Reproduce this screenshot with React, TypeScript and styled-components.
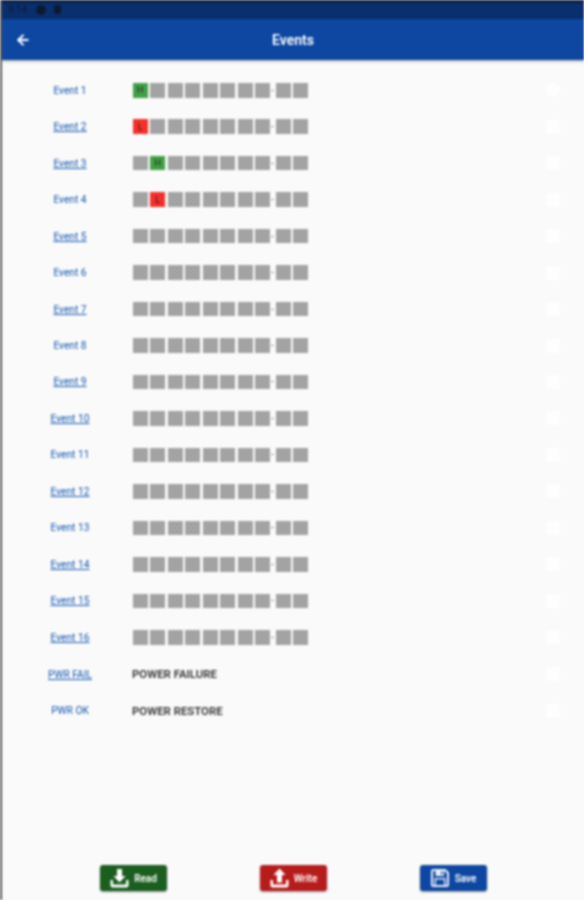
import * as React from 'react'
import styled, { createGlobalStyle } from 'styled-components'
import { ArrowLeft } from 'lucide-react'

const Global = createGlobalStyle`
  html, body {
    margin: 0;
    background: #fafafa;
  }
`

const Page = styled.div`
  border-left: 2px solid #555;
  box-sizing: border-box;
  display: flex;
  filter: blur(0.9px);
  flex-direction: column;
  font-family: Roboto, "Liberation Sans", sans-serif;
  height: 900px;
  overflow: hidden;
  width: 584px;
`

const StatusBar = styled.div`
  align-items: center;
  background: linear-gradient(#08172f 0, #0a2f6e 4px);
  color: #0c1a30;
  display: flex;
  font-size: 10px;
  gap: 9px;
  height: 19px;
  padding-left: 6px;
`

const Dot = styled.span`
  background: #0c1a30;
  border-radius: 50%;
  height: 10px;
  width: 10px;
`

const Pin = styled.span`
  background: #0c1a30;
  border-radius: 2px;
  height: 9px;
  margin-left: -1px;
  width: 7px;
`

const AppBar = styled.header`
  align-items: center;
  background: #0d47a1;
  box-shadow: 0 1px 3px rgba(0, 0, 0, 0.35);
  color: #fff;
  display: flex;
  height: 41px;
  padding-left: 13px;
  position: relative;
`

const Title = styled.h1`
  flex: 1;
  font-size: 14px;
  font-weight: 600;
  margin: 0;
  padding-right: 29px;
  text-align: center;
`

const List = styled.div`
  display: flex;
  flex-direction: column;
  padding-top: 12px;
`

const Row = styled.div`
  align-items: center;
  box-sizing: border-box;
  display: flex;
  height: 36.47px;
`

const PowerRow = styled(Row)`
  padding-top: 1px;
`

const EventLink = styled.a<{ $plain?: boolean }>`
  box-sizing: border-box;
  color: #1557b0;
  flex: none;
  font-size: 10.2px;
  padding-left: 5px;
  text-align: center;
  text-decoration: ${(p) => (p.$plain ? 'none' : 'underline')};
  width: 131px;
`

const Cells = styled.div`
  align-items: center;
  display: flex;
  gap: 2.9px;
  width: 413px;
`

const Cell = styled.div<{ $state?: 'H' | 'L' }>`
  align-items: center;
  background: ${(p) =>
    p.$state === 'H' ? '#43a047' : p.$state === 'L' ? '#f4302a' : '#a3a3a3'};
  color: #222;
  display: flex;
  flex: none;
  font-size: 9px;
  height: 14.6px;
  justify-content: center;
  width: 14.6px;
`

const Dash = styled.span`
  background: #999;
  flex: none;
  height: 1px;
  margin: 0 -1.4px;
  width: 3px;
`

const PowerText = styled.div`
  color: #333;
  font-size: 11.4px;
  font-weight: 600;
  margin-left: -1px;
  width: 414px;
`

const Check = styled.div<{ $round?: boolean }>`
  background: #fefefe;
  border-radius: ${(p) => (p.$round ? '50%' : '2px')};
  flex: none;
  height: 14px;
  width: 14px;
`

const Footer = styled.footer`
  display: grid;
  grid-template-columns: repeat(3, 67px);
  justify-content: space-between;
  margin-top: auto;
  padding: 0 97px 9px 98px;
`

const ActionButton = styled.button<{ $color: string }>`
  align-items: center;
  background: ${(p) => p.$color};
  border: 0;
  border-radius: 3px;
  box-shadow: 0 1px 2px rgba(0, 0, 0, 0.4);
  color: #fff;
  display: flex;
  font-family: inherit;
  font-size: 10px;
  font-weight: 600;
  gap: 5px;
  height: 26px;
  justify-content: center;
  padding: 0;
`

const DownloadIcon = () => (
  <svg width="19" height="20" viewBox="0 0 19 20" fill="#fff">
    <path d="M7 1h5v7h3.500L9.500 14.500 3.500 8H7z" />
    <path d="M0.500 12h2.500v4.500h13V12h2.500v5.500a2 2 0 0 1-2 2h-14a2 2 0 0 1-2-2z" />
  </svg>
)

const UploadIcon = () => (
  <svg width="19" height="20" viewBox="0 0 19 20" fill="#fff">
    <path d="M9.500 0.500 15.500 7H12v7.500H7V7H3.500z" />
    <path d="M0.500 12h2.500v4.500h13V12h2.500v5.500a2 2 0 0 1-2 2h-14a2 2 0 0 1-2-2z" />
  </svg>
)

const SaveIcon = () => (
  <svg width="19" height="20" viewBox="0 0 19 20" fill="#e8eefa" fillRule="evenodd">
    <path d="M2 1h12.500L18 4.500V17a2 2 0 0 1-2 2H2a2 2 0 0 1-2-2V3a2 2 0 0 1 2-2zM2 3v14h1.500v-7h11v7H16V5.500L13.500 3H13v5H4.500V3zM10 3.500v3h1.500v-3zM5 11.500V17h8v-5.500z" />
  </svg>
)

const events = Array.from({ length: 16 }, (_, i) => i + 1)
const marks: Record<number, { index: number; state: 'H' | 'L' }> = {
  1: { index: 0, state: 'H' },
  2: { index: 0, state: 'L' },
  3: { index: 1, state: 'H' },
  4: { index: 1, state: 'L' },
}

const plainRows = [1, 4, 6, 8, 11, 13]

const App: React.FC = () => {
  return (
    <>
      <Global />
      <Page>
        <StatusBar>
          <span>9:14</span>
          <Dot />
          <Pin />
        </StatusBar>
        <AppBar>
          <ArrowLeft size={16} strokeWidth={3} />
          <Title>Events</Title>
        </AppBar>
        <List>
          {events.map((n) => {
            const mark = marks[n]
            return (
              <Row key={n}>
                <EventLink $plain={plainRows.includes(n)}>Event {n}</EventLink>
                <Cells>
                  {Array.from({ length: 10 }, (_, i) => (
                    <React.Fragment key={i}>
                      {i === 8 && <Dash />}
                      <Cell $state={mark && mark.index === i ? mark.state : undefined}>
                        {mark && mark.index === i ? mark.state : ''}
                      </Cell>
                    </React.Fragment>
                  ))}
                </Cells>
                <Check $round={n === 1} />
              </Row>
            )
          })}
          <PowerRow>
            <EventLink>PWR FAIL</EventLink>
            <PowerText>POWER FAILURE</PowerText>
            <Check />
          </PowerRow>
          <PowerRow>
            <EventLink $plain>PWR OK</EventLink>
            <PowerText>POWER RESTORE</PowerText>
            <Check />
          </PowerRow>
        </List>
        <Footer>
          <ActionButton $color="#1b5e20">
            <DownloadIcon />
            Read
          </ActionButton>
          <ActionButton $color="#b71c1c">
            <UploadIcon />
            Write
          </ActionButton>
          <ActionButton $color="#0d47a1">
            <SaveIcon />
            Save
          </ActionButton>
        </Footer>
      </Page>
    </>
  )
}

export default App
